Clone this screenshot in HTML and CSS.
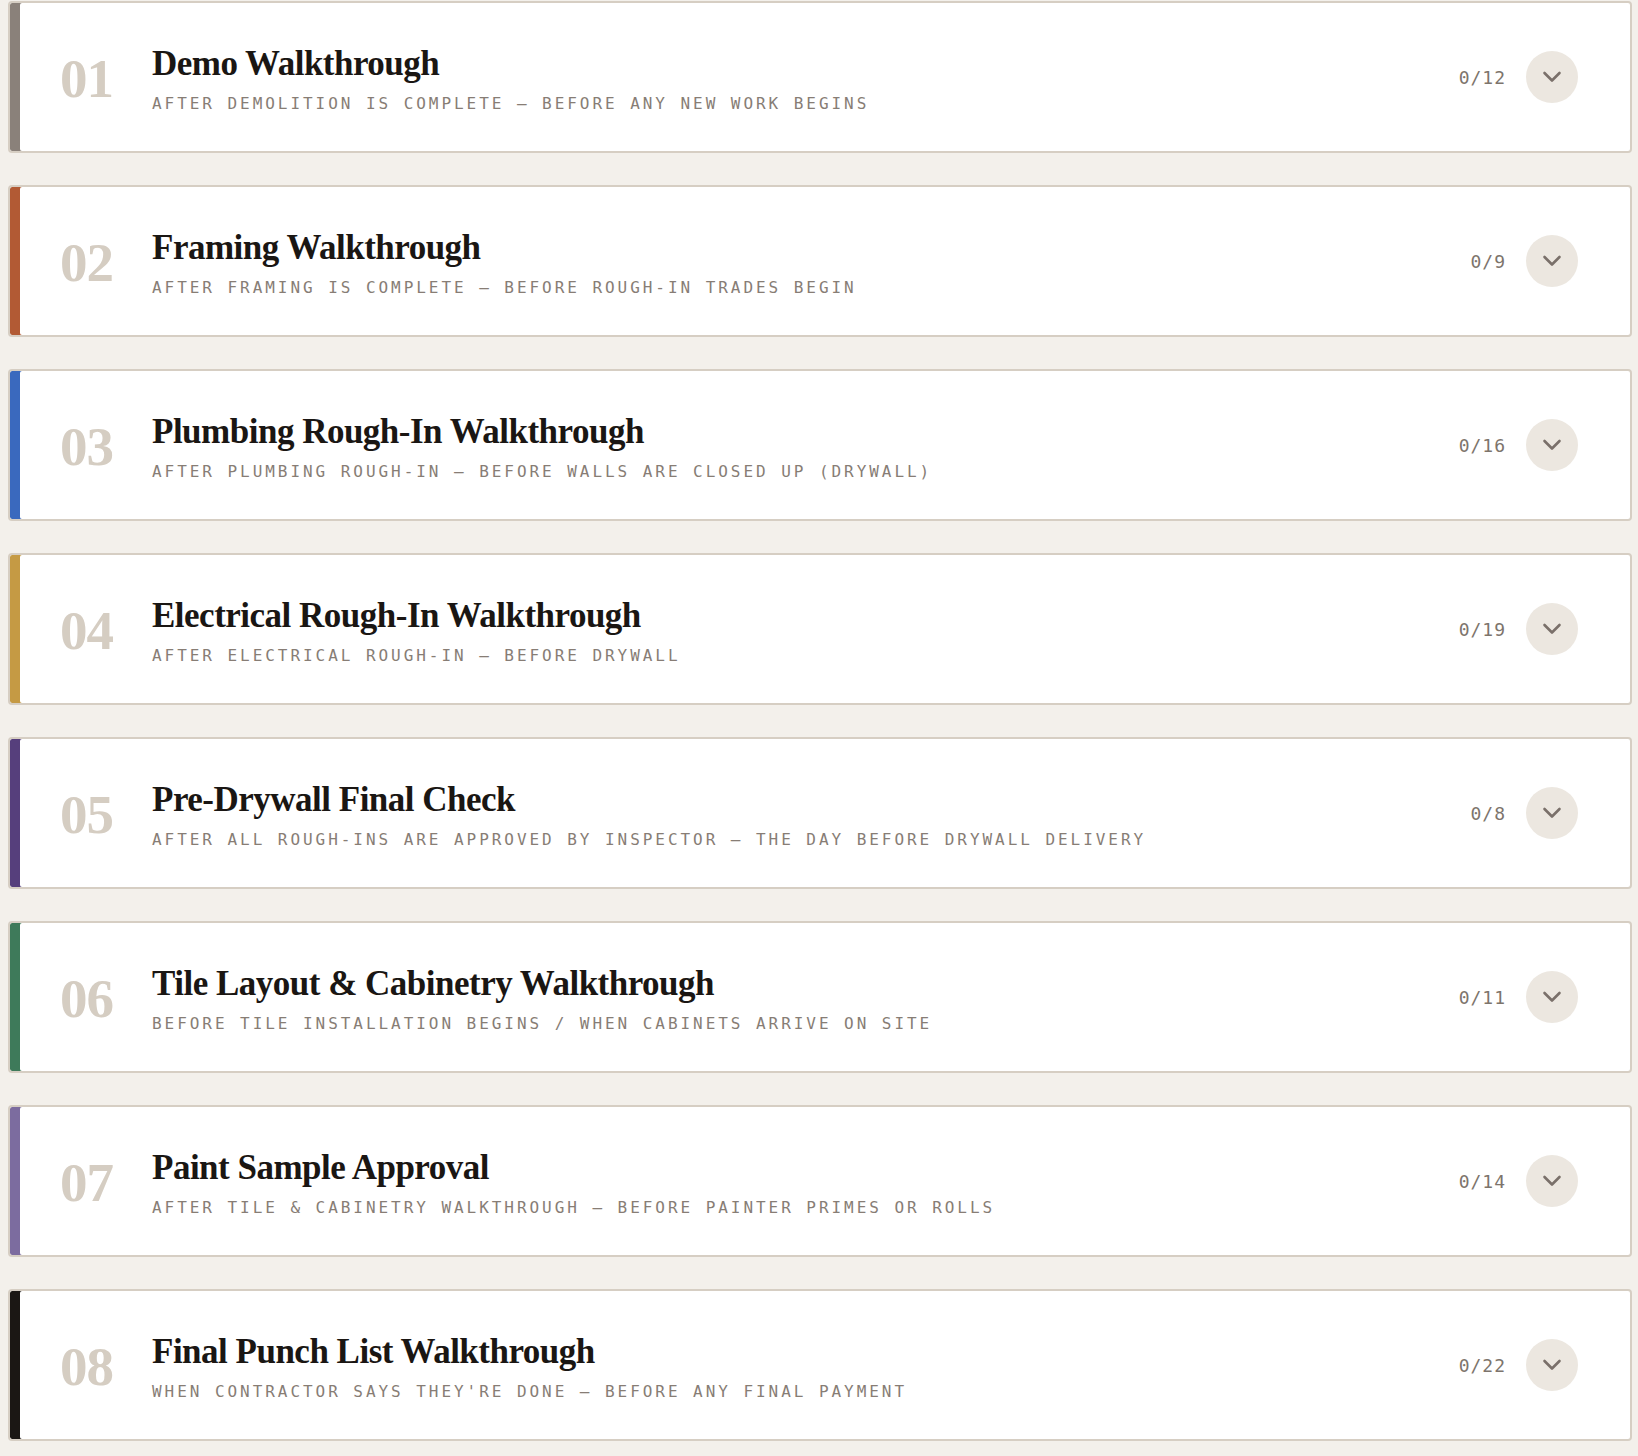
FILE: index.html
```html
<!DOCTYPE html>
<html lang="en">
<head>
<meta charset="UTF-8" />
<meta name="viewport" content="width=device-width, initial-scale=1" />
<title>Renovation Walkthroughs</title>
<link rel="stylesheet" href="styles.css">
</head>
<body>

<div class="phases">

  <div class="phase phase-demo">
    <div class="phase-num">01</div>
    <div class="phase-text">
      <h2>Demo Walkthrough</h2>
      <p>After demolition is complete — before any new work begins</p>
    </div>
    <span class="phase-count">0/12</span>
    <button class="phase-toggle" aria-label="Expand"><svg width="20" height="12" viewBox="0 0 20 12"><polyline points="2.5,2 10,9.5 17.5,2" /></svg></button>
  </div>

  <div class="phase phase-framing">
    <div class="phase-num">02</div>
    <div class="phase-text">
      <h2>Framing Walkthrough</h2>
      <p>After framing is complete — before rough-in trades begin</p>
    </div>
    <span class="phase-count">0/9</span>
    <button class="phase-toggle" aria-label="Expand"><svg width="20" height="12" viewBox="0 0 20 12"><polyline points="2.5,2 10,9.5 17.5,2" /></svg></button>
  </div>

  <div class="phase phase-plumbing">
    <div class="phase-num">03</div>
    <div class="phase-text">
      <h2>Plumbing Rough-In Walkthrough</h2>
      <p>After plumbing rough-in — before walls are closed up (drywall)</p>
    </div>
    <span class="phase-count">0/16</span>
    <button class="phase-toggle" aria-label="Expand"><svg width="20" height="12" viewBox="0 0 20 12"><polyline points="2.5,2 10,9.5 17.5,2" /></svg></button>
  </div>

  <div class="phase phase-electrical">
    <div class="phase-num">04</div>
    <div class="phase-text">
      <h2>Electrical Rough-In Walkthrough</h2>
      <p>After electrical rough-in — before drywall</p>
    </div>
    <span class="phase-count">0/19</span>
    <button class="phase-toggle" aria-label="Expand"><svg width="20" height="12" viewBox="0 0 20 12"><polyline points="2.5,2 10,9.5 17.5,2" /></svg></button>
  </div>

  <div class="phase phase-predrywall">
    <div class="phase-num">05</div>
    <div class="phase-text">
      <h2>Pre-Drywall Final Check</h2>
      <p>After all rough-ins are approved by inspector — the day before drywall delivery</p>
    </div>
    <span class="phase-count">0/8</span>
    <button class="phase-toggle" aria-label="Expand"><svg width="20" height="12" viewBox="0 0 20 12"><polyline points="2.5,2 10,9.5 17.5,2" /></svg></button>
  </div>

  <div class="phase phase-tile">
    <div class="phase-num">06</div>
    <div class="phase-text">
      <h2>Tile Layout &amp; Cabinetry Walkthrough</h2>
      <p>Before tile installation begins / when cabinets arrive on site</p>
    </div>
    <span class="phase-count">0/11</span>
    <button class="phase-toggle" aria-label="Expand"><svg width="20" height="12" viewBox="0 0 20 12"><polyline points="2.5,2 10,9.5 17.5,2" /></svg></button>
  </div>

  <div class="phase phase-paint">
    <div class="phase-num">07</div>
    <div class="phase-text">
      <h2>Paint Sample Approval</h2>
      <p>After tile &amp; cabinetry walkthrough — before painter primes or rolls</p>
    </div>
    <span class="phase-count">0/14</span>
    <button class="phase-toggle" aria-label="Expand"><svg width="20" height="12" viewBox="0 0 20 12"><polyline points="2.5,2 10,9.5 17.5,2" /></svg></button>
  </div>

  <div class="phase phase-punch">
    <div class="phase-num">08</div>
    <div class="phase-text">
      <h2>Final Punch List Walkthrough</h2>
      <p>When contractor says they're done — before any final payment</p>
    </div>
    <span class="phase-count">0/22</span>
    <button class="phase-toggle" aria-label="Expand"><svg width="20" height="12" viewBox="0 0 20 12"><polyline points="2.5,2 10,9.5 17.5,2" /></svg></button>
  </div>

</div>

</body>
</html>
```

FILE: styles.css
```css
body {
  margin: 0;
  background: #f3f0eb;
  font-family: "Liberation Serif", Times, serif;
}
.phases {
  display: flex;
  flex-direction: column;
  gap: 32px;
  padding: 1px 6px 0 8px;
}
.phase {
  display: flex;
  align-items: center;
  height: 152px;
  box-sizing: border-box;
  padding: 0 52px 0 50px;
  background: #fff;
  border: 2px solid #d6cec3;
  border-radius: 4px;
  box-shadow: inset 10px 0 0 #8a817a;
}
.phase-framing { box-shadow: inset 10px 0 0 #b25a34; }
.phase-plumbing { box-shadow: inset 10px 0 0 #3a69be; }
.phase-electrical { box-shadow: inset 10px 0 0 #c59a44; }
.phase-predrywall { box-shadow: inset 10px 0 0 #563f7c; }
.phase-tile { box-shadow: inset 10px 0 0 #3e7a5a; }
.phase-paint { box-shadow: inset 10px 0 0 #7c6c9f; }
.phase-punch { box-shadow: inset 10px 0 0 #1b1714; }

.phase-num {
  width: 92px;
  flex-shrink: 0;
  padding-top: 3px;
  font-size: 55px;
  line-height: 1;
  font-weight: bold;
  letter-spacing: -1px;
  color: #d5cdc2;
}
.phase-text {
  padding-top: 2px;
}
.phase-text h2 {
  margin: 0 0 9px;
  font-size: 35px;
  line-height: 42px;
  font-weight: bold;
  letter-spacing: -0.5px;
  color: #1a1613;
}
.phase-text p {
  margin: 0;
  font-family: "DejaVu Sans Mono", monospace;
  font-size: 16px;
  line-height: 20px;
  letter-spacing: 2.95px;
  text-transform: uppercase;
  color: #877d75;
}
.phase-count {
  margin-left: auto;
  margin-right: 20px;
  font-family: "DejaVu Sans Mono", monospace;
  font-size: 18px;
  letter-spacing: 1px;
  color: #7d746c;
}
.phase-toggle {
  width: 52px;
  height: 52px;
  flex-shrink: 0;
  display: flex;
  align-items: center;
  justify-content: center;
  padding: 0;
  border: none;
  border-radius: 50%;
  background: #ece7e0;
  cursor: pointer;
}
.phase-toggle polyline {
  fill: none;
  stroke: #7a706a;
  stroke-width: 2.6;
  stroke-linecap: round;
  stroke-linejoin: round;
}
```
